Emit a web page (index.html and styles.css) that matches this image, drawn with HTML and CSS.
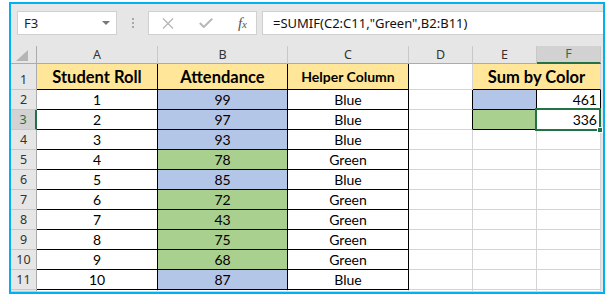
FILE: index.html
```html
<!DOCTYPE html>
<html lang="en">
<head>
    <meta charset="UTF-8">
    <title>Sum by Color</title>
    <link rel="stylesheet" href="styles.css">
</head>
<body>
    <div class="frame">
        <div class="toolbar">
            <div class="namebox">
                <span>F3</span>
                <svg width="8" height="4" viewBox="0 0 8 4"><polygon points="0,0 8,0 4,4" fill="#777"/></svg>
            </div>
            <div class="grip"><i></i><i></i><i></i></div>
            <div class="fnbtns">
                <svg width="12" height="11" viewBox="0 0 12 11"><path d="M1 0.5 L11 10.5 M11 0.5 L1 10.5" stroke="#b8b8b8" stroke-width="1.4" fill="none"/></svg>
                <svg width="14" height="10" viewBox="0 0 14 10"><path d="M0.8 5 L4.8 9 L13.2 0.8" stroke="#b8b8b8" stroke-width="2" fill="none"/></svg>
                <span class="fx">f<small>x</small></span>
            </div>
            <div class="formula">=SUMIF(C2:C11,"Green",B2:B11)</div>
        </div>

        <div class="sheet">
            <!-- column headers -->
            <div class="corner"><svg width="12" height="11" viewBox="0 0 12 11"><polygon points="12,0 12,11 0,11" fill="#b5b5b5"/></svg></div>
            <div class="colh">A</div>
            <div class="colh">B</div>
            <div class="colh">C</div>
            <div class="colh">D</div>
            <div class="colh">E</div>
            <div class="colh active">F</div>

            <!-- row 1 -->
            <div class="rowh">1</div>
            <div class="c box head">Student Roll</div>
            <div class="c box head">Attendance</div>
            <div class="c box head small">Helper Column</div>
            <div class="c"></div>
            <div class="c head merged edge-bottom">Sum by Color</div>

            <!-- row 2 -->
            <div class="rowh">2</div>
            <div class="c box">1</div>
            <div class="c box blue">99</div>
            <div class="c box">Blue</div>
            <div class="c edge-right"></div>
            <div class="c box blue"></div>
            <div class="c box num">461</div>

            <!-- row 3 -->
            <div class="rowh active">3</div>
            <div class="c box">2</div>
            <div class="c box blue">97</div>
            <div class="c box">Blue</div>
            <div class="c edge-right"></div>
            <div class="c box green"></div>
            <div class="c box num selected">336</div>

            <!-- row 4 -->
            <div class="rowh">4</div>
            <div class="c box">3</div>
            <div class="c box blue">93</div>
            <div class="c box">Blue</div>
            <div class="c"></div><div class="c"></div><div class="c"></div>

            <!-- row 5 -->
            <div class="rowh">5</div>
            <div class="c box">4</div>
            <div class="c box green">78</div>
            <div class="c box">Green</div>
            <div class="c"></div><div class="c"></div><div class="c"></div>

            <!-- row 6 -->
            <div class="rowh">6</div>
            <div class="c box">5</div>
            <div class="c box blue">85</div>
            <div class="c box">Blue</div>
            <div class="c"></div><div class="c"></div><div class="c"></div>

            <!-- row 7 -->
            <div class="rowh">7</div>
            <div class="c box">6</div>
            <div class="c box green">72</div>
            <div class="c box">Green</div>
            <div class="c"></div><div class="c"></div><div class="c"></div>

            <!-- row 8 -->
            <div class="rowh">8</div>
            <div class="c box">7</div>
            <div class="c box green">43</div>
            <div class="c box">Green</div>
            <div class="c"></div><div class="c"></div><div class="c"></div>

            <!-- row 9 -->
            <div class="rowh">9</div>
            <div class="c box">8</div>
            <div class="c box green">75</div>
            <div class="c box">Green</div>
            <div class="c"></div><div class="c"></div><div class="c"></div>

            <!-- row 10 -->
            <div class="rowh">10</div>
            <div class="c box">9</div>
            <div class="c box green">68</div>
            <div class="c box">Green</div>
            <div class="c"></div><div class="c"></div><div class="c"></div>

            <!-- row 11 -->
            <div class="rowh">11</div>
            <div class="c box">10</div>
            <div class="c box blue">87</div>
            <div class="c box">Blue</div>
            <div class="c"></div><div class="c"></div><div class="c"></div>

            <!-- row 12 (cut off) -->
            <div class="rowh"></div>
            <div class="c"></div><div class="c"></div><div class="c"></div>
            <div class="c"></div><div class="c"></div><div class="c"></div>
        </div>
    </div>
</body>
</html>
```

FILE: styles.css
```css
body {
    margin: 0;
    background-color: #fff;
    font-family: Lato, "Noto Sans", sans-serif;
}
.frame {
    width: 592px;
    height: 288px;
    margin: 2px 0 0 9px;
    border: 2px solid #00b0f0;
    background-color: #e6e6e6;
    overflow: hidden;
}

/* formula bar */
.toolbar {
    height: 42px;
    box-sizing: border-box;
    padding: 7px 0 0 6px;
    display: flex;
    align-items: flex-start;
}
.namebox, .fnbtns, .formula {
    height: 24px;
    box-sizing: border-box;
    background-color: #fff;
    border: 1px solid #d0d0d0;
    display: flex;
    align-items: center;
}
.namebox {
    width: 100px;
    padding: 0 6px 1px 6px;
    justify-content: space-between;
    font-family: "Noto Sans", sans-serif;
    font-size: 13px;
    color: #222;
}
.grip {
    width: 31px;
    height: 24px;
    display: flex;
    flex-direction: column;
    align-items: center;
    justify-content: center;
    gap: 2px;
}
.grip i {
    width: 2px;
    height: 2px;
    background-color: #a8a8a8;
}
.fnbtns {
    width: 109px;
    padding: 0 9px 0 13px;
    justify-content: space-between;
}
.fx {
    font-family: "Liberation Serif", serif;
    font-style: italic;
    font-size: 15px;
    color: #555;
}
.fx small {
    font-size: 11px;
}
.formula {
    flex: 1;
    margin-left: 5px;
    padding: 0 0 1px 10px;
    border-right: none;
    font-family: "Noto Sans", sans-serif;
    font-size: 13px;
    color: #111;
}

/* sheet grid */
.sheet {
    width: 590px;
    display: grid;
    grid-template-columns: 26px 121px 130px 121px 64px 64px 64px;
    grid-template-rows: 18px 26px repeat(10, 20px) 2px;
    background-color: #fff;
}
.sheet > div {
    box-sizing: border-box;
    display: flex;
    align-items: flex-end;
    justify-content: center;
}
.corner, .colh, .rowh {
    background-color: #e6e6e6;
    font-family: "Noto Sans", sans-serif;
    font-size: 12.5px;
    color: #333;
}
.corner {
    justify-content: flex-end;
    padding: 0 3px 2px 0;
    border-right: 1px solid #ababab;
    border-bottom: 1px solid #ababab;
}
.colh {
    align-items: center;
    border-right: 1px solid #c8c8c8;
    border-bottom: 1px solid #ababab;
}
.rowh {
    padding-bottom: 1px;
    border-right: 1px solid #ababab;
    border-bottom: 1px solid #c8c8c8;
}
.colh.active {
    background-color: #d2d2d2;
    color: #217346;
    border-bottom: 2px solid #217346;
}
.rowh.active {
    background-color: #d2d2d2;
    color: #217346;
    border-right: 2px solid #217346;
}

.c {
    font-size: 14px;
    color: #000;
    padding-bottom: 1px;
    border-right: 1px solid #d4d4d4;
    border-bottom: 1px solid #d4d4d4;
}
.c.box {
    border-right-color: #000;
    border-bottom-color: #000;
}
.edge-right {
    border-right-color: #000 !important;
}
.edge-bottom {
    border-bottom-color: #000 !important;
}
.head {
    background-color: #ffe699;
    font-weight: bold;
    font-size: 16.5px;
    padding-bottom: 2px;
}
.head.small {
    font-size: 14px;
    padding-bottom: 4px;
}
.merged {
    grid-column: span 2;
}
.blue {
    background-color: #b4c6e7;
}
.green {
    background-color: #a9d08e;
}
.num {
    justify-content: flex-end !important;
    padding-right: 3px;
}
.selected {
    position: relative;
}
.selected::before {
    content: "";
    position: absolute;
    left: -2px;
    top: -2px;
    right: -1px;
    bottom: -2px;
    border: 2px solid #217346;
}
.selected::after {
    content: "";
    position: absolute;
    right: -3px;
    bottom: -4px;
    width: 4px;
    height: 4px;
    background-color: #217346;
    border: 1px solid #fff;
}
```
